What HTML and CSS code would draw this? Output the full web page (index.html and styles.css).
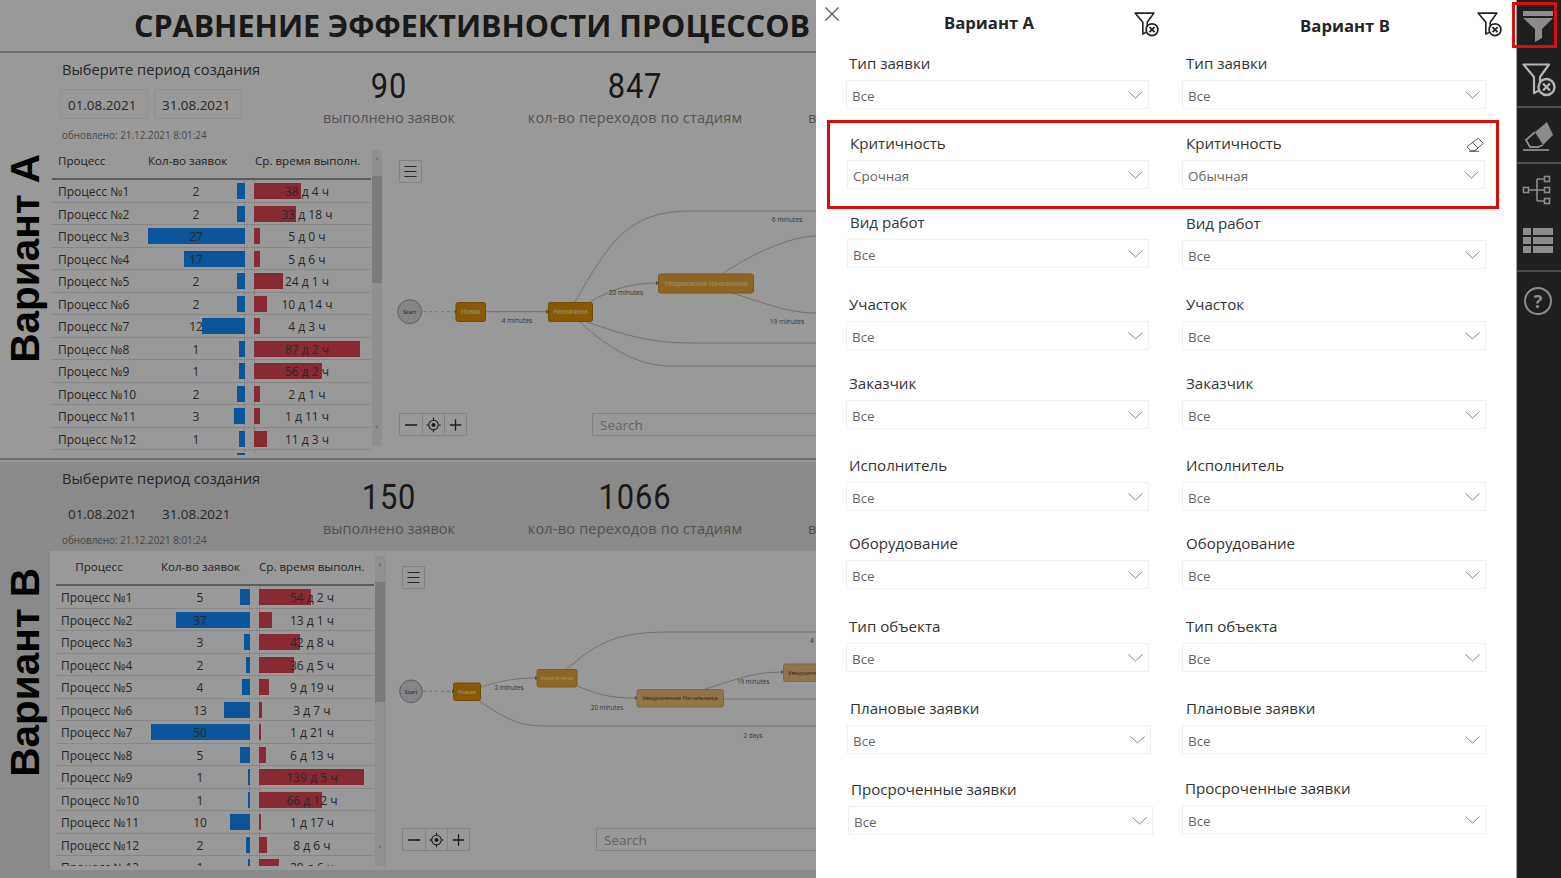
FILE: index.html
```html
<!DOCTYPE html>
<html lang="ru">

<head>
    <meta charset="UTF-8">
    <meta name="viewport" content="width=device-width, initial-scale=1.0">
    <title>Сравнение эффективности процессов</title>
    <link rel="stylesheet" href="styles.css">
</head>

<body>
    <svg class="sprite" aria-hidden="true">
        <symbol id="filter-clear" viewBox="0 0 34 34">
            <path d="M1.5 1.5H27L18 14V27L12 30V14Z" fill="none" stroke="currentColor" stroke-width="2.2" stroke-linejoin="round" />
            <circle cx="24.5" cy="24" r="8" fill="var(--icon-bg)" stroke="currentColor" stroke-width="2.4" />
            <path d="M21 20.5L28 27.5M28 20.5L21 27.5" stroke="currentColor" stroke-width="2.4" />
        </symbol>
        <symbol id="chevron" viewBox="0 0 15 8">
            <path d="M.5 .5L7.5 7L14.5 .5" fill="none" stroke="#777" stroke-width=".9" />
        </symbol>
        <symbol id="menu-lines" viewBox="0 0 21 21">
            <path d="M4.5 5.5H16.5M4.5 10.5H16.5M4.5 15.5H16.5" stroke="#444" stroke-width="1.2" />
        </symbol>
        <symbol id="minus" viewBox="0 0 22 22">
            <path d="M5 11H17" stroke="#333" stroke-width="1.6" />
        </symbol>
        <symbol id="plus" viewBox="0 0 22 22">
            <path d="M5 11H17M11 5V17" stroke="#333" stroke-width="1.4" />
        </symbol>
        <symbol id="target" viewBox="0 0 22 22">
            <circle cx="11" cy="11" r="5" fill="none" stroke="#333" stroke-width="1.2" />
            <circle cx="11" cy="11" r="2.2" fill="#333" />
            <path d="M11 3.5V6M11 16V18.5M3.5 11H6M16 11H18.5" stroke="#333" stroke-width="1.2" />
        </symbol>
    </svg>

    <div class="app">
        <div class="reports">
            <section class="report report-a">
                <header class="page-title">
                    <h1>СРАВНЕНИЕ ЭФФЕКТИВНОСТИ ПРОЦЕССОВ</h1>
                </header>
                <div class="report-main">
                    <div class="variant-label"><span>Вариант А</span></div>
                    <div class="report-body">
                        <div class="report-head">
                            <div class="period">
                                <div class="period-title">Выберите период создания</div>
                                <div class="dates">
                                    <div class="date-box">01.08.2021</div>
                                    <div class="date-box">31.08.2021</div>
                                </div>
                                <div class="updated">обновлено: 21.12.2021 8:01:24</div>
                            </div>
                            <div class="stat stat-first">
                                <div class="stat-value">90</div>
                                <div class="stat-label">выполнено заявок</div>
                            </div>
                            <div class="stat">
                                <div class="stat-value">847</div>
                                <div class="stat-label stat-label-wide">кол-во переходов по стадиям</div>
                            </div>
                            <div class="stat stat-cut">
                                <div class="stat-label">в</div>
                            </div>
                        </div>
                        <div class="report-content">
                            <div class="table-wrap">
                                <div class="table">
                                    <div class="row row-head">
                                        <span>Процесс</span>
                                        <span>Кол-во заявок</span>
                                        <span></span>
                                        <span class="head-wide">Ср. время выполн.</span>
                                    </div>
                                    <div class="rows">
                                        <div class="row"><span class="name">Процесс №1</span><span class="count"><span class="bar" style="width:8px"></span><span class="val">2</span></span><span></span><span class="time"><span class="bar" style="width:47px"></span><span class="val">38 д 4 ч</span></span></div>
                                        <div class="row"><span class="name">Процесс №2</span><span class="count"><span class="bar" style="width:8px"></span><span class="val">2</span></span><span></span><span class="time"><span class="bar" style="width:42px"></span><span class="val">33 д 18 ч</span></span></div>
                                        <div class="row"><span class="name">Процесс №3</span><span class="count"><span class="bar" style="width:97px"></span><span class="val">27</span></span><span></span><span class="time"><span class="bar" style="width:6px"></span><span class="val">5 д 0 ч</span></span></div>
                                        <div class="row"><span class="name">Процесс №4</span><span class="count"><span class="bar" style="width:61px"></span><span class="val">17</span></span><span></span><span class="time"><span class="bar" style="width:6px"></span><span class="val">5 д 6 ч</span></span></div>
                                        <div class="row"><span class="name">Процесс №5</span><span class="count"><span class="bar" style="width:8px"></span><span class="val">2</span></span><span></span><span class="time"><span class="bar" style="width:29px"></span><span class="val">24 д 1 ч</span></span></div>
                                        <div class="row"><span class="name">Процесс №6</span><span class="count"><span class="bar" style="width:8px"></span><span class="val">2</span></span><span></span><span class="time"><span class="bar" style="width:13px"></span><span class="val">10 д 14 ч</span></span></div>
                                        <div class="row"><span class="name">Процесс №7</span><span class="count"><span class="bar" style="width:43px"></span><span class="val">12</span></span><span></span><span class="time"><span class="bar" style="width:5px"></span><span class="val">4 д 3 ч</span></span></div>
                                        <div class="row"><span class="name">Процесс №8</span><span class="count"><span class="bar" style="width:4px"></span><span class="val">1</span></span><span></span><span class="time"><span class="bar" style="width:106px"></span><span class="val">87 д 2 ч</span></span></div>
                                        <div class="row"><span class="name">Процесс №9</span><span class="count"><span class="bar" style="width:4px"></span><span class="val">1</span></span><span></span><span class="time"><span class="bar" style="width:68px"></span><span class="val">56 д 2 ч</span></span></div>
                                        <div class="row"><span class="name">Процесс №10</span><span class="count"><span class="bar" style="width:8px"></span><span class="val">2</span></span><span></span><span class="time"><span class="bar" style="width:2px"></span><span class="val">2 д 1 ч</span></span></div>
                                        <div class="row"><span class="name">Процесс №11</span><span class="count"><span class="bar" style="width:11px"></span><span class="val">3</span></span><span></span><span class="time"><span class="bar" style="width:1px"></span><span class="val">1 д 11 ч</span></span></div>
                                        <div class="row"><span class="name">Процесс №12</span><span class="count"><span class="bar" style="width:4px"></span><span class="val">1</span></span><span></span><span class="time"><span class="bar" style="width:13px"></span><span class="val">11 д 3 ч</span></span></div>
                                        <div class="row"><span class="name"></span><span class="count"><span class="bar" style="width:8px"></span></span><span></span><span class="time"></span></div>
                                    </div>
                                </div>
                                <div class="scrollbar">
                                    <span class="scroll-arrow">˄</span>
                                    <span class="scroll-thumb"></span>
                                    <span class="scroll-arrow">˅</span>
                                </div>
                            </div>
                            <div class="map">
                                <svg class="map-canvas" viewBox="384 150 432 308" width="432" height="308">
                                    <g class="edges">
                                        <path class="dashed" d="M423 311.7H455" />
                                        <path d="M486 311.7H547" />
                                        <path d="M590 302C610 290 630 283 657 283" />
                                        <path d="M575 302C610 240 630 211 690 211H816" />
                                        <path d="M722 274C750 255 790 236 816 236" />
                                        <path d="M732 293C770 305 790 313 816 313" />
                                        <path d="M816 343H690C650 343 625 335 587 322" />
                                        <path d="M816 366H670C640 366 610 350 580 322" />
                                    </g>
                                    <path class="arrow" d="M455 309.5L458 311.7L455 314ZM546 309.5L549 311.7L546 314ZM656 280.8L659 283L656 285.2Z" />
                                    <circle class="start" cx="409.7" cy="311.7" r="12" />
                                    <text class="node-dark" x="409.7" y="314">Start</text>
                                    <rect class="node" x="456" y="302.5" width="29.5" height="19" rx="2" />
                                    <text class="node-text" x="470.7" y="314">Новая</text>
                                    <rect class="node" x="548.5" y="302.5" width="44" height="19" rx="2" />
                                    <text class="node-text" x="570.5" y="314">Назначена</text>
                                    <rect class="node node-mid" x="658.5" y="274" width="95" height="19" rx="2" />
                                    <text class="node-text" x="706" y="285.5">Уведомление Начальника</text>
                                    <text class="edge-label" x="517" y="323">4 minutes</text>
                                    <text class="edge-label" x="626" y="295">20 minutes</text>
                                    <text class="edge-label" x="787" y="222">6 minutes</text>
                                    <text class="edge-label" x="787" y="324">19 minutes</text>
                                </svg>
                                <button class="map-btn map-menu map-menu-a"><svg width="21" height="21"><use href="#menu-lines" /></svg></button>
                                <div class="zoom-group zoom-a">
                                    <span><svg width="22" height="22"><use href="#minus" /></svg></span>
                                    <span><svg width="22" height="22"><use href="#target" /></svg></span>
                                    <span><svg width="22" height="22"><use href="#plus" /></svg></span>
                                </div>
                                <div class="map-search search-a">Search</div>
                            </div>
                        </div>
                    </div>
                </div>
            </section>

            <section class="report report-b">
                <div class="report-main">
                    <div class="variant-label"><span>Вариант В</span></div>
                    <div class="report-body">
                        <div class="report-head">
                            <div class="period">
                                <div class="period-title">Выберите период создания</div>
                                <div class="dates">
                                    <div class="date-box">01.08.2021</div>
                                    <div class="date-box">31.08.2021</div>
                                </div>
                                <div class="updated">обновлено: 21.12.2021 8:01:24</div>
                            </div>
                            <div class="stat stat-first">
                                <div class="stat-value">150</div>
                                <div class="stat-label">выполнено заявок</div>
                            </div>
                            <div class="stat">
                                <div class="stat-value">1066</div>
                                <div class="stat-label stat-label-wide">кол-во переходов по стадиям</div>
                            </div>
                            <div class="stat stat-cut">
                                <div class="stat-label">в</div>
                            </div>
                        </div>
                        <div class="report-content">
                            <div class="table-wrap">
                                <div class="table">
                                    <div class="row row-head">
                                        <span>Процесс</span>
                                        <span>Кол-во заявок</span>
                                        <span></span>
                                        <span class="head-wide">Ср. время выполн.</span>
                                    </div>
                                    <div class="rows">
                                        <div class="row"><span class="name">Процесс №1</span><span class="count"><span class="bar" style="width:10px"></span><span class="val">5</span></span><span></span><span class="time"><span class="bar" style="width:52px"></span><span class="val">54 д 2 ч</span></span></div>
                                        <div class="row"><span class="name">Процесс №2</span><span class="count"><span class="bar" style="width:74px"></span><span class="val">37</span></span><span></span><span class="time"><span class="bar" style="width:13px"></span><span class="val">13 д 1 ч</span></span></div>
                                        <div class="row"><span class="name">Процесс №3</span><span class="count"><span class="bar" style="width:6px"></span><span class="val">3</span></span><span></span><span class="time"><span class="bar" style="width:41px"></span><span class="val">42 д 8 ч</span></span></div>
                                        <div class="row"><span class="name">Процесс №4</span><span class="count"><span class="bar" style="width:4px"></span><span class="val">2</span></span><span></span><span class="time"><span class="bar" style="width:35px"></span><span class="val">36 д 5 ч</span></span></div>
                                        <div class="row"><span class="name">Процесс №5</span><span class="count"><span class="bar" style="width:8px"></span><span class="val">4</span></span><span></span><span class="time"><span class="bar" style="width:10px"></span><span class="val">9 д 19 ч</span></span></div>
                                        <div class="row"><span class="name">Процесс №6</span><span class="count"><span class="bar" style="width:26px"></span><span class="val">13</span></span><span></span><span class="time"><span class="bar" style="width:3px"></span><span class="val">3 д 7 ч</span></span></div>
                                        <div class="row"><span class="name">Процесс №7</span><span class="count"><span class="bar" style="width:99px"></span><span class="val">50</span></span><span></span><span class="time"><span class="bar" style="width:2px"></span><span class="val">1 д 21 ч</span></span></div>
                                        <div class="row"><span class="name">Процесс №8</span><span class="count"><span class="bar" style="width:10px"></span><span class="val">5</span></span><span></span><span class="time"><span class="bar" style="width:7px"></span><span class="val">6 д 13 ч</span></span></div>
                                        <div class="row"><span class="name">Процесс №9</span><span class="count"><span class="bar" style="width:2px"></span><span class="val">1</span></span><span></span><span class="time"><span class="bar" style="width:105px"></span><span class="val">139 д 5 ч</span></span></div>
                                        <div class="row"><span class="name">Процесс №10</span><span class="count"><span class="bar" style="width:2px"></span><span class="val">1</span></span><span></span><span class="time"><span class="bar" style="width:63px"></span><span class="val">66 д 12 ч</span></span></div>
                                        <div class="row"><span class="name">Процесс №11</span><span class="count"><span class="bar" style="width:20px"></span><span class="val">10</span></span><span></span><span class="time"><span class="bar" style="width:2px"></span><span class="val">1 д 17 ч</span></span></div>
                                        <div class="row"><span class="name">Процесс №12</span><span class="count"><span class="bar" style="width:4px"></span><span class="val">2</span></span><span></span><span class="time"><span class="bar" style="width:8px"></span><span class="val">8 д 6 ч</span></span></div>
                                        <div class="row"><span class="name">Процесс №13</span><span class="count"><span class="bar" style="width:2px"></span><span class="val">1</span></span><span></span><span class="time"><span class="bar" style="width:20px"></span><span class="val">20 д 6 ч</span></span></div>
                                    </div>
                                </div>
                                <div class="scrollbar">
                                    <span class="scroll-arrow">˄</span>
                                    <span class="scroll-thumb"></span>
                                    <span class="scroll-arrow">˅</span>
                                </div>
                            </div>
                            <div class="map">
                                <svg class="map-canvas" viewBox="386 551 430 319" width="430" height="319">
                                    <g class="edges">
                                        <path class="dashed" d="M423 691.3H452" />
                                        <path d="M481 687C500 681 515 678 536 678" />
                                        <path d="M577 686C600 695 610 698 636 698" />
                                        <path d="M567 669C600 640 620 632 670 632H816" />
                                        <path d="M705 689C730 682 750 672 782 672" />
                                        <path d="M723 699H816" />
                                        <path d="M478 700C510 722 520 726 550 726H816" />
                                    </g>
                                    <path class="arrow" d="M452 689.3L455 691.3L452 693.3ZM535 676L538 678L535 680ZM635 696L638 698L635 700ZM781 670L784 672L781 674Z" />
                                    <circle class="start" cx="411" cy="691.3" r="11.3" />
                                    <text class="node-dark" x="411" y="693.5">Start</text>
                                    <rect class="node" x="453.5" y="683" width="27" height="17.5" rx="2" />
                                    <text class="node-text" x="467" y="693.5">Новая</text>
                                    <rect class="node node-mid" x="537" y="669.5" width="40" height="17.5" rx="2" />
                                    <text class="node-text" x="557" y="680">Назначена</text>
                                    <rect class="node node-pale" x="637" y="689.5" width="86.5" height="17.5" rx="2" />
                                    <text class="node-dark" x="680" y="700">Уведомление Начальника</text>
                                    <rect class="node node-pale" x="783.5" y="664" width="60" height="17.5" rx="2" />
                                    <text class="node-dark anchor-start" x="788" y="675">Уведомление</text>
                                    <text class="edge-label" x="509" y="689.5">2 minutes</text>
                                    <text class="edge-label" x="607" y="709.5">20 minutes</text>
                                    <text class="edge-label" x="812" y="643">4</text>
                                    <text class="edge-label" x="753" y="683.5">19 minutes</text>
                                    <text class="edge-label" x="753" y="737.5">2 days</text>
                                </svg>
                                <button class="map-btn map-menu map-menu-b"><svg width="21" height="21"><use href="#menu-lines" /></svg></button>
                                <div class="zoom-group zoom-b">
                                    <span><svg width="22" height="22"><use href="#minus" /></svg></span>
                                    <span><svg width="22" height="22"><use href="#target" /></svg></span>
                                    <span><svg width="22" height="22"><use href="#plus" /></svg></span>
                                </div>
                                <div class="map-search search-b">Search</div>
                            </div>
                        </div>
                    </div>
                </div>
            </section>
            <div class="dim"></div>
        </div>

        <aside class="panel">
            <button class="close-btn">
                <svg width="16" height="16" viewBox="0 0 16 16"><path d="M1.5 1.5L14.5 14.5M14.5 1.5L1.5 14.5" stroke="#555" stroke-width="1.3" /></svg>
            </button>
            <div class="panel-head">
                <div class="head-col">
                    <h2>Вариант А</h2>
                    <svg class="head-icon" width="25" height="25"><use href="#filter-clear" /></svg>
                </div>
                <div class="head-col head-col-b">
                    <h2>Вариант В</h2>
                    <svg class="head-icon" width="25" height="25"><use href="#filter-clear" /></svg>
                </div>
            </div>
            <div class="filters">
                <div class="field"><div class="field-label">Тип заявки</div><div class="select"><span>Все</span><svg width="15" height="8"><use href="#chevron" /></svg></div></div>
                <div class="field col-b"><div class="field-label">Тип заявки</div><div class="select"><span>Все</span><svg width="15" height="8"><use href="#chevron" /></svg></div></div>

                <div class="field nudge-1"><div class="field-label">Критичность</div><div class="select"><span>Срочная</span><svg width="15" height="8"><use href="#chevron" /></svg></div></div>
                <div class="field col-b short"><div class="field-label">Критичность</div><div class="select"><span>Обычная</span><svg width="15" height="8"><use href="#chevron" /></svg></div>
                    <svg class="eraser-small" width="18" height="15" viewBox="0 0 18 15"><path d="M1 9.700L12.300 1.300L17.300 6.300L9 13.700H4.500ZM6.500 5.500L12 11" fill="none" stroke="#444" stroke-width=".9" /><path d="M3 14.300H13" stroke="#444" stroke-width=".9" /></svg>
                </div>

                <div class="field nudge-1"><div class="field-label">Вид работ</div><div class="select"><span>Все</span><svg width="15" height="8"><use href="#chevron" /></svg></div></div>
                <div class="field col-b down-1"><div class="field-label">Вид работ</div><div class="select"><span>Все</span><svg width="15" height="8"><use href="#chevron" /></svg></div></div>

                <div class="field"><div class="field-label">Участок</div><div class="select"><span>Все</span><svg width="15" height="8"><use href="#chevron" /></svg></div></div>
                <div class="field col-b"><div class="field-label">Участок</div><div class="select"><span>Все</span><svg width="15" height="8"><use href="#chevron" /></svg></div></div>

                <div class="field"><div class="field-label">Заказчик</div><div class="select"><span>Все</span><svg width="15" height="8"><use href="#chevron" /></svg></div></div>
                <div class="field col-b"><div class="field-label">Заказчик</div><div class="select"><span>Все</span><svg width="15" height="8"><use href="#chevron" /></svg></div></div>

                <div class="field"><div class="field-label">Исполнитель</div><div class="select"><span>Все</span><svg width="15" height="8"><use href="#chevron" /></svg></div></div>
                <div class="field col-b"><div class="field-label">Исполнитель</div><div class="select"><span>Все</span><svg width="15" height="8"><use href="#chevron" /></svg></div></div>

                <div class="field"><div class="field-label">Оборудование</div><div class="select"><span>Все</span><svg width="15" height="8"><use href="#chevron" /></svg></div></div>
                <div class="field col-b"><div class="field-label">Оборудование</div><div class="select"><span>Все</span><svg width="15" height="8"><use href="#chevron" /></svg></div></div>

                <div class="field"><div class="field-label">Тип объекта</div><div class="select"><span>Все</span><svg width="15" height="8"><use href="#chevron" /></svg></div></div>
                <div class="field col-b"><div class="field-label">Тип объекта</div><div class="select"><span>Все</span><svg width="15" height="8"><use href="#chevron" /></svg></div></div>

                <div class="field nudge-1 wide-1"><div class="field-label">Плановые заявки</div><div class="select"><span>Все</span><svg width="15" height="8"><use href="#chevron" /></svg></div></div>
                <div class="field col-b"><div class="field-label">Плановые заявки</div><div class="select"><span>Все</span><svg width="15" height="8"><use href="#chevron" /></svg></div></div>

                <div class="field nudge-2 wide-2"><div class="field-label">Просроченные заявки</div><div class="select"><span>Все</span><svg width="15" height="8"><use href="#chevron" /></svg></div></div>
                <div class="field col-b up-1"><div class="field-label">Просроченные заявки</div><div class="select"><span>Все</span><svg width="15" height="8"><use href="#chevron" /></svg></div></div>
            </div>
            <div class="red-frame"></div>
        </aside>

        <nav class="sidebar">
            <div class="side-group side-filters">
                <svg class="side-icon" width="44" height="52" viewBox="0 0 44 52">
                    <path d="M6 11H36V16H6Z" fill="#8c8c8c" />
                    <path d="M6 18H36L25 29V38L18 42V29Z" fill="#8c8c8c" />
                </svg>
                <svg class="side-icon icon-clear" width="44" height="55" viewBox="0 0 44 55">
                    <g transform="translate(5 11)"><use href="#filter-clear" width="34" height="34" /></g>
                </svg>
            </div>
            <div class="side-group side-eraser">
                <svg class="side-icon" width="44" height="56" viewBox="0 0 44 56">
                    <path d="M18 24L30 14L36 27L26 37Z" fill="#8c8c8c" />
                    <path d="M18 24L9 32L13 39H21L26 37" fill="none" stroke="#8c8c8c" stroke-width="1.8" />
                    <path d="M6 42H32" stroke="#8c8c8c" stroke-width="1.8" />
                </svg>
            </div>
            <div class="side-group side-views">
                <svg class="side-icon" width="44" height="52" viewBox="0 0 44 52">
                    <g fill="none" stroke="#8c8c8c" stroke-width="1.6">
                        <rect x="6.500" y="23.500" width="5" height="5" />
                        <rect x="27.500" y="12.500" width="5" height="5" />
                        <rect x="27.500" y="23.500" width="5" height="5" />
                        <rect x="27.500" y="34.500" width="5" height="5" />
                        <path d="M11.500 26H27.500M20 15H27.500M20 37H27.500M20 15V37" />
                    </g>
                </svg>
                <svg class="side-icon" width="44" height="54" viewBox="0 0 44 54">
                    <path d="M6 12H14V19H6ZM16 12H36V19H16ZM6 21H14V28H6ZM16 21H36V28H16ZM6 30H14V37H6ZM16 30H36V37H16Z" fill="#8c8c8c" />
                </svg>
            </div>
            <div class="side-group side-help">
                <span class="help-icon">?</span>
            </div>
            <div class="red-frame-side"></div>
        </nav>
    </div>
</body>

</html>
```

FILE: styles.css
```css
* {
    box-sizing: border-box;
}

html,
body {
    margin: 0;
    padding: 0;
    height: 100%;
    overflow: hidden;
    background-color: #ffffff;
}

body {
    font-family: 'Open Sans', 'Noto Sans', sans-serif;
    color: #333;
}

.sprite {
    position: absolute;
    width: 0;
    height: 0;
}

.app {
    display: flex;
    width: 1561px;
    height: 878px;
}

/* left side, reports under the dim layer */
.reports {
    position: relative;
    width: 816px;
    height: 878px;
    overflow: hidden;
    flex: none;
}

.dim {
    position: absolute;
    inset: 0;
    background-color: rgba(0, 0, 0, 0.4);
}

.report-a {
    height: 458px;
    background-color: #ffffff;
}

.report-b {
    position: relative;
    height: 416px;
    margin-top: 4px;
    background-color: #e6e6e6;
}

.report-b::before {
    content: "";
    position: absolute;
    left: 0;
    right: 0;
    top: -4px;
    height: 2px;
    background-color: #b5b5b5;
}

.page-title {
    height: 53px;
    border-bottom: 2px solid #b8b8b8;
    padding-left: 134px;
}

.page-title h1 {
    margin: 0;
    font-size: 30.5px;
    line-height: 50px;
    font-weight: 700;
    color: #2a2a2a;
    white-space: nowrap;
}

.report-main {
    display: flex;
    height: 100%;
}

.report-a .report-main {
    height: 405px;
}

.variant-label {
    width: 50px;
    flex: none;
    display: flex;
    align-items: center;
    justify-content: center;
    padding-top: 6px;
}

.report-b .variant-label {
    padding-top: 5px;
}

.variant-label span {
    writing-mode: vertical-rl;
    transform: rotate(180deg);
    font-family: 'Liberation Sans', sans-serif;
    font-weight: 700;
    font-size: 40.5px;
    line-height: 50px;
    color: #000;
    white-space: nowrap;
}

.report-body {
    width: 766px;
    display: flex;
    flex-direction: column;
}

.report-head {
    display: flex;
    height: 97px;
    flex: none;
}

.report-b .report-head {
    height: 89px;
}

.period {
    width: 255px;
    flex: none;
    padding: 6px 0 0 12px;
}

.period-title {
    font-size: 14.7px;
    line-height: 20px;
    color: #444;
}

.dates {
    display: flex;
    gap: 6px;
    margin: 10px 0 0 -2px;
}

.date-box {
    width: 88px;
    height: 30px;
    padding-left: 7px;
    border: 1px solid #eeeeee;
    font-size: 13.4px;
    line-height: 30px;
    color: #444;
}

.report-b .date-box {
    border-color: #e2e2e2;
}

.updated {
    margin-top: 9px;
    font-size: 9.9px;
    line-height: 14px;
    color: #777;
}

.report-b .period {
    padding-top: 6px;
}

.report-b .dates {
    margin-top: 10px;
}

.report-b .updated {
    margin-top: 5px;
}

.stat {
    width: 324px;
    flex: none;
    text-align: center;
    padding-top: 14px;
}

.stat-first {
    width: 168px;
}

.stat-value {
    font-family: 'Roboto', sans-serif;
    font-size: 35px;
    line-height: 40px;
    letter-spacing: 1px;
    color: #2b2b2b;
    transform: scaleX(0.88);
}

.report-b .stat {
    padding-top: 16px;
}

.stat-label {
    margin-top: 1px;
    font-size: 14.5px;
    line-height: 20px;
    color: #8a8a8a;
    white-space: nowrap;
}

.stat-label-wide {
    letter-spacing: 0.2px;
}

.stat-cut {
    width: auto;
    padding-top: 55px;
    margin-left: 11px;
}

.report-b .stat-cut {
    padding-top: 57px;
}

.stat-cut .stat-label {
    margin-top: 0;
}

.report-content {
    display: flex;
    flex: 1;
    min-height: 0;
}

/* process tables */
.table-wrap {
    display: flex;
    flex: none;
    padding-left: 2px;
    width: 334px;
}

.report-b .report-content {
    background-color: #ffffff;
    height: 319px;
    flex: none;
}

.report-b .table-wrap {
    width: 336px;
    padding: 5px 0 4px 6px;
    border-right: 1px solid #f2f2f2;
}

.table {
    width: 319px;
    display: flex;
    flex-direction: column;
    min-height: 0;
}

.report-b .table {
    width: 318px;
}

.rows {
    flex: 1;
    min-height: 0;
    overflow: hidden;
}

.report-a .rows {
    height: 275px;
    flex: none;
}

.row {
    display: grid;
    grid-template-columns: 96px 97px 9px 105px 10px;
    height: 22.5px;
    border-bottom: 1px solid #e2e2e2;
    font-size: 12px;
    line-height: 24px;
    color: #444;
    white-space: nowrap;
}

.report-b .row {
    grid-template-columns: 95px 99px 9px 105px 9px;
}

.report-b .row-head,
.row-head {
    height: 30px;
    line-height: 22px;
    border-bottom: 2px solid #9a9a9a;
    font-size: 11.6px;
    font-weight: 400;
    color: #3a3a3a;
}

.report-b .row-head span {
    text-align: center;
}

.report-b .row-head span:first-child {
    padding-right: 9px;
}

.report-a .row span:first-child {
    padding-left: 6px;
}

.report-b .row .name {
    padding-left: 5px;
}

.head-wide {
    grid-column: 4 / 6;
}

.report-a .row-head span:nth-child(4) {
    padding-left: 1px;
}

.report-b .head-wide {
    padding-right: 9px;
}

.count,
.time {
    position: relative;
    text-align: center;
    border-color: #d4d4d4;
    border-style: dotted;
    border-width: 0;
}

.count {
    border-right-width: 1px;
}

.time {
    border-left-width: 1px;
}

.bar {
    position: absolute;
    top: 3px;
    height: 16px;
}

.count .bar {
    right: -1px;
    background-color: #118dff;
}

.time .bar {
    left: -1px;
    background-color: #e34658;
}

.val {
    position: relative;
}

.scrollbar {
    width: 10px;
    margin-left: 1px;
    flex: none;
    background-color: #f0f0f0;
    display: flex;
    flex-direction: column;
    align-items: center;
    height: 296px;
}

.report-b .scrollbar {
    height: 310px;
}

.scroll-arrow {
    height: 26px;
    font-size: 10px;
    line-height: 24px;
    color: #555;
    flex: none;
}

.scroll-thumb {
    width: 100%;
    height: 107px;
    background-color: #cdcdcd;
}

.scrollbar .scroll-arrow:last-child {
    margin-top: auto;
    height: 28px;
}

.report-b .scroll-thumb {
    height: 120px;
}

/* process map */
.map {
    position: relative;
    flex: 1;
    min-width: 0;
}

.map-canvas {
    display: block;
}

.edges path {
    fill: none;
    stroke: #c9bfae;
    stroke-width: 1;
}

.edges .dashed {
    stroke-dasharray: 3 3;
}

.arrow {
    fill: #8a8070;
}

.start {
    fill: #dcdce4;
    stroke: #9a9aa6;
    stroke-width: 1;
}

.node {
    fill: #e39400;
    stroke: #b87a0a;
    stroke-width: 1;
}

.node-mid {
    fill: #ecac38;
    stroke: #c89238;
}

.node-pale {
    fill: #f0c478;
    stroke: #d8ae68;
}

.node-text,
.node-dark,
.edge-label {
    font-family: 'Open Sans', sans-serif;
    text-anchor: middle;
}

.node-text {
    font-size: 5.9px;
    font-weight: 600;
    fill: #f7e6bc;
}

.report-a .node-text {
    font-size: 6.2px;
}

.node-dark {
    font-size: 5.9px;
    fill: #4a3a22;
}

.node-dark.anchor-start {
    text-anchor: start;
}

.edge-label {
    font-size: 6.2px;
    fill: #555;
}

.report-a .edge-label {
    font-size: 6.6px;
}

.map-btn {
    padding: 0;
    background: #fff;
    border: 1px solid #d9d9d9;
    border-radius: 1px;
}

.map-menu {
    position: absolute;
    width: 23px;
    height: 23px;
    display: flex;
    align-items: center;
    justify-content: center;
}

.map-menu-a {
    left: 15px;
    top: 10px;
}

.map-menu-b {
    left: 16px;
    top: 15px;
}

.zoom-group {
    position: absolute;
    display: flex;
    height: 23px;
    border: 1px solid #d9d9d9;
    border-radius: 1px;
    background: #fff;
}

.zoom-group span {
    width: 22px;
    display: flex;
    align-items: center;
    justify-content: center;
    border-left: 1px solid #d9d9d9;
}

.zoom-group span:first-child {
    border-left: 0;
}

.zoom-a {
    left: 15px;
    top: 263px;
}

.zoom-b {
    left: 16px;
    top: 277px;
}

.map-search {
    position: absolute;
    right: -10px;
    height: 23px;
    border: 1px solid #d9d9d9;
    border-radius: 1px;
    padding-left: 7px;
    font-size: 13.5px;
    line-height: 23px;
    color: #a8a8a8;
}

.search-a {
    left: 208px;
    top: 263px;
}

.search-b {
    left: 210px;
    top: 277px;
}

/* filter panel */
.panel {
    position: relative;
    width: 701px;
    flex: none;
    background-color: #ffffff;
    border-right: 1px solid #a0a0a0;
    --icon-bg: #ffffff;
}

.close-btn {
    position: absolute;
    left: 8px;
    top: 6px;
    padding: 0;
    width: 16px;
    height: 16px;
    border: 0;
    background: none;
}

.panel-head {
    display: grid;
    grid-template-columns: 343px 343px;
    height: 54px;
}

.head-col {
    position: relative;
    text-align: center;
    color: #222;
}

.head-col h2 {
    margin: 12px 0 0;
    padding-left: 3px;
    font-size: 16.7px;
    line-height: 22px;
    font-weight: 700;
    color: #252525;
}

.head-col-b h2 {
    margin-top: 15px;
    padding-left: 29px;
}

.head-icon {
    position: absolute;
    top: 12px;
    right: 0;
}

.filters {
    display: grid;
    grid-template-columns: 303px 304px;
    grid-template-rows: 80px 79px 82px 79px 82px 78px 83px 82px 81px 50px;
    column-gap: 33px;
    padding-left: 30px;
}

.field {
    position: relative;
}

.field-label {
    height: 26px;
    padding-left: 3px;
    font-size: 15.1px;
    line-height: 18px;
    color: #333;
    white-space: nowrap;
}

.col-b .field-label {
    padding-left: 4px;
}

.select {
    display: flex;
    align-items: center;
    justify-content: space-between;
    height: 29px;
    padding: 0 5px 0 5px;
    border: 1px solid #f0f0f0;
    font-size: 13.4px;
    color: #666;
}

.select span {
    padding-top: 3px;
}

.select svg {
    margin-top: 1px;
    display: block;
}

.nudge-1 {
    margin-left: 1px;
}

.nudge-2 {
    margin-left: 2px;
}

.wide-1 {
    margin-right: -2px;
}

.wide-2 {
    margin-right: -4px;
}

.short {
    margin-right: 1px;
}

.down-1 {
    margin-top: 1px;
}

.up-1 {
    margin-top: -1px;
}

.col-b.up-1 .field-label {
    padding-left: 3px;
}

.eraser-small {
    position: absolute;
    right: 1px;
    top: 3px;
}

.red-frame {
    position: absolute;
    left: 11px;
    top: 120px;
    width: 672px;
    height: 89px;
    border: 3px solid #dc0d0d;
}

/* right dark bar */
.sidebar {
    position: relative;
    width: 44px;
    flex: none;
    background-color: #1f1f1f;
    --icon-bg: #1f1f1f;
}

.side-group {
    border-bottom: 2px solid #4a4a4a;
}

.side-filters {
    height: 108px;
}

.side-eraser {
    height: 56px;
}

.side-views {
    height: 108px;
}

.side-help {
    border-bottom: 0;
    display: flex;
    justify-content: center;
    padding: 15px 2px 0 0;
}

.side-icon {
    display: block;
}

.icon-clear {
    color: #b4b4b4;
}

.help-icon {
    width: 28px;
    height: 28px;
    border: 2px solid #8c8c8c;
    border-radius: 50%;
    text-align: center;
    font-family: 'Open Sans', sans-serif;
    font-size: 18px;
    font-weight: 700;
    line-height: 24px;
    color: #8c8c8c;
}

.red-frame-side {
    position: absolute;
    left: -5px;
    top: 2px;
    width: 45px;
    height: 46px;
    border: 3px solid #dc0d0d;
}
```
